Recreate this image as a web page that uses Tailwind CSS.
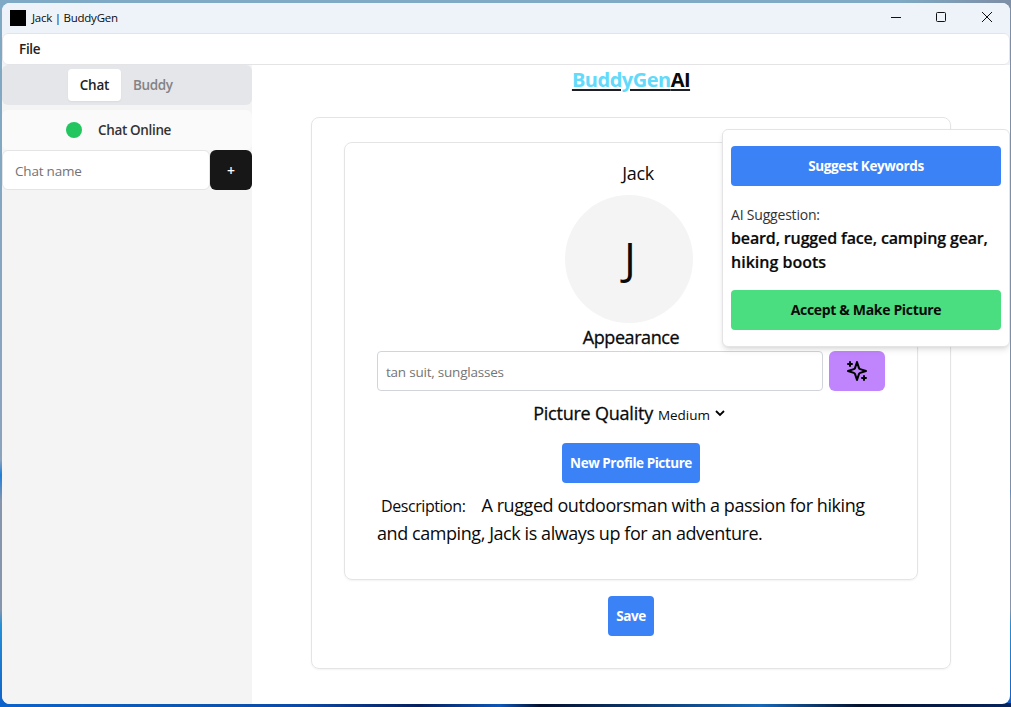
<!DOCTYPE html>
<html lang="en">
<head>
<meta charset="utf-8">
<title>Jack | BuddyGen</title>
<script src="https://cdn.jsdelivr.net/npm/@tailwindcss/browser@4"></script>
</head>
<body class="h-[707px] w-[1011px] overflow-hidden bg-[linear-gradient(to_right,transparent_900px,#7e90a8_1000px,#7e90a8),linear-gradient(to_bottom,#7fa9c4_0,#8ba3bd_460px,#1f7fdc_475px,#8495ad_500px,#8495ad_610px,#2590d8_625px,#0f5fc8_707px)] bg-[length:1011px_490px,1011px_707px] bg-no-repeat font-['Open_Sans','Noto_Sans',sans-serif] text-[#0a0a0a]">
<div class="flex h-[707px] flex-col justify-end bg-[linear-gradient(to_right,#0a63cc,#0a55b0_200px,#0c4aa8_300px,#06205e_420px,#0d57b8_500px,#04102e_540px,#1668b8_760px,#04122e_860px,#06245e_1011px)] bg-[length:100%_4px] bg-bottom bg-no-repeat pb-[3px] pl-[2px]">
<div class="relative flex h-[701px] w-[1008px] flex-col overflow-hidden rounded-lg bg-white">
  <header class="flex h-[30px] shrink-0 items-center bg-[#eef3fa] pl-2">
    <div class="size-4 bg-black"></div>
    <span class="ml-1.5 text-[11.5px] tracking-[-0.25px] whitespace-nowrap">Jack | BuddyGen</span>
    <div class="-mr-px ml-auto flex">
      <svg class="h-[30px] w-[46px]" viewBox="0 0 46 30" fill="none" stroke="#111"><path d="M17 14.500H27"/></svg>
      <svg class="h-[30px] w-[45px]" viewBox="0 0 45 30" fill="none" stroke="#111"><rect x="16.500" y="9.500" width="9" height="9" rx="1"/></svg>
      <svg class="h-[30px] w-[46px]" viewBox="0 0 46 30" fill="none" stroke="#111"><path d="M17 9l10 10M27 9L17 19"/></svg>
    </div>
  </header>
  <nav class="flex h-8 shrink-0 items-center rounded-md border border-[#e4e4e7] pl-4 shadow-[0_0_0_4px_#eef3fa] [clip-path:inset(0)]"><span class="text-[13.5px] font-semibold tracking-[-0.3px] text-[#222]">File</span></nav>
  <div class="flex min-h-0 flex-1">
    <aside class="w-[250px] shrink-0 bg-[#f4f4f4]">
      <div class="flex h-10 items-center rounded-md bg-[#e5e6e9] pl-[66px]">
        <div class="flex h-8 w-[53px] items-center justify-center rounded bg-white shadow-xs"><span class="text-[13.5px] font-semibold tracking-[-0.2px] text-[#222]">Chat</span></div>
        <span class="ml-3 text-[13.5px] font-semibold tracking-[-0.4px] text-[#838386]">Buddy</span>
      </div>
      <div class="mt-[5px] flex h-10 items-center rounded-md bg-[#fafafa] pl-16">
        <span class="size-4 rounded-full bg-[#22c55e]"></span>
        <span class="ml-4 text-[13.5px] font-semibold tracking-[-0.35px] text-[#333]">Chat Online</span>
      </div>
      <div class="flex h-10">
        <div class="flex w-[208px] items-center rounded-md border border-[#e4e4e7] bg-white pt-0.5 pl-3"><span class="text-[13.5px] tracking-[-0.2px] text-[#737373]">Chat name</span></div>
        <div class="flex w-[42px] items-center justify-center rounded-md bg-[#171717] pt-0.5 text-sm font-semibold text-white">+</div>
      </div>
    </aside>
    <main class="flex flex-1 flex-col items-center">
      <h1 class="h-[30px] text-xl leading-[30px] font-bold tracking-[-0.5px]"><span class="underline decoration-[#1c1f26] decoration-2 underline-offset-2"><span class="text-[#61dafb]">BuddyGen</span>AI</span></h1>
      <section class="mt-[22px] flex h-[552px] w-[640px] flex-col items-center rounded-lg border border-[#e4e4e7] px-8 pt-6 shadow-xs">
        <div class="flex h-[438px] w-[574px] flex-col items-center rounded-lg border border-[#e4e4e7] px-8 pt-4 shadow-xs">
          <div class="ml-3.5 h-9 text-lg leading-7 tracking-[-0.3px]">Jack</div>
          <div class="mr-1 flex size-32 items-center justify-center rounded-full bg-[#f4f4f4] pb-1 pl-0.5 text-[44px]">J</div>
          <div class="h-7 text-lg leading-7 tracking-[-0.43px] [-webkit-text-stroke:0.3px]">Appearance</div>
          <div class="flex w-[508px] gap-1.5">
            <div class="flex h-10 w-[446px] items-center rounded border border-[#d1d5db] pt-0.5 pl-2"><span class="text-[13.5px] tracking-[-0.22px] text-[#757575]">tan suit, sunglasses</span></div>
            <div class="flex h-10 w-14 items-center justify-center rounded-md bg-[#c084fc]">
              <svg class="size-6" viewBox="0 0 24 24" fill="none" stroke="#000" stroke-width="2" stroke-linecap="round" stroke-linejoin="round"><path d="m12 3-1.912 5.813a2 2 0 0 1-1.275 1.275L3 12l5.813 1.912a2 2 0 0 1 1.275 1.275L12 21l1.912-5.813a2 2 0 0 1 1.275-1.275L21 12l-5.813-1.912a2 2 0 0 1-1.275-1.275L12 3ZM5 3v4M19 17v4M3 5h4M17 19h4"/></svg>
            </div>
          </div>
          <div class="mt-2 mr-[3px] flex h-7 items-center whitespace-nowrap"><span class="text-lg tracking-[-0.22px] [-webkit-text-stroke:0.3px]">Picture Quality</span><span class="mt-1 ml-[5px] text-[13.5px] font-medium tracking-[-0.05px]">Medium</span>
            <svg class="ml-1 h-2.5 w-3" viewBox="0 0 12 10" fill="none" stroke="#000" stroke-width="1.800"><path d="M2 3l4 4 4-4"/></svg>
          </div>
          <div class="mt-4 flex h-10 w-[138px] items-center justify-center rounded bg-[#3b82f6]"><span class="text-[13.5px] font-bold tracking-[-0.45px] whitespace-nowrap text-white">New Profile Picture</span></div>
          <div class="mt-2 w-[508px] text-lg leading-7 tracking-[-0.43px] whitespace-nowrap"><span class="ml-1 text-base">Description:</span><span class="ml-4">A rugged outdoorsman with a passion for hiking</span><br><span>and camping, Jack is always up for an adventure.</span></div>
        </div>
        <div class="mt-4 flex h-10 w-[46px] items-center justify-center rounded bg-[#3b82f6]"><span class="text-[13.5px] font-bold tracking-[-0.45px] text-white">Save</span></div>
      </section>
    </main>
  </div>
  <div class="absolute top-[126px] left-[720px] h-[218px] w-[288px] rounded-md border border-[#e4e4e7] bg-white px-2 pt-4 shadow-md">
    <div class="flex h-10 w-[270px] items-center justify-center rounded bg-[#3b82f6]"><span class="text-[13.5px] font-bold tracking-[-0.37px] text-white">Suggest Keywords</span></div>
    <div class="mt-[19px] h-5 text-sm tracking-[-0.2px] text-[#333]">AI Suggestion:</div>
    <div class="mt-px text-base leading-6 font-semibold tracking-[-0.14px] whitespace-nowrap [-webkit-text-stroke:0.2px]"><span>beard, rugged face, camping gear,</span><br><span class="tracking-normal">hiking boots</span></div>
    <div class="mt-4 flex h-10 w-[270px] items-center justify-center rounded bg-[#4ade80]"><span class="text-sm font-bold tracking-[-0.33px]">Accept &amp; Make Picture</span></div>
  </div>
</div>
</div>
</body>
</html>
